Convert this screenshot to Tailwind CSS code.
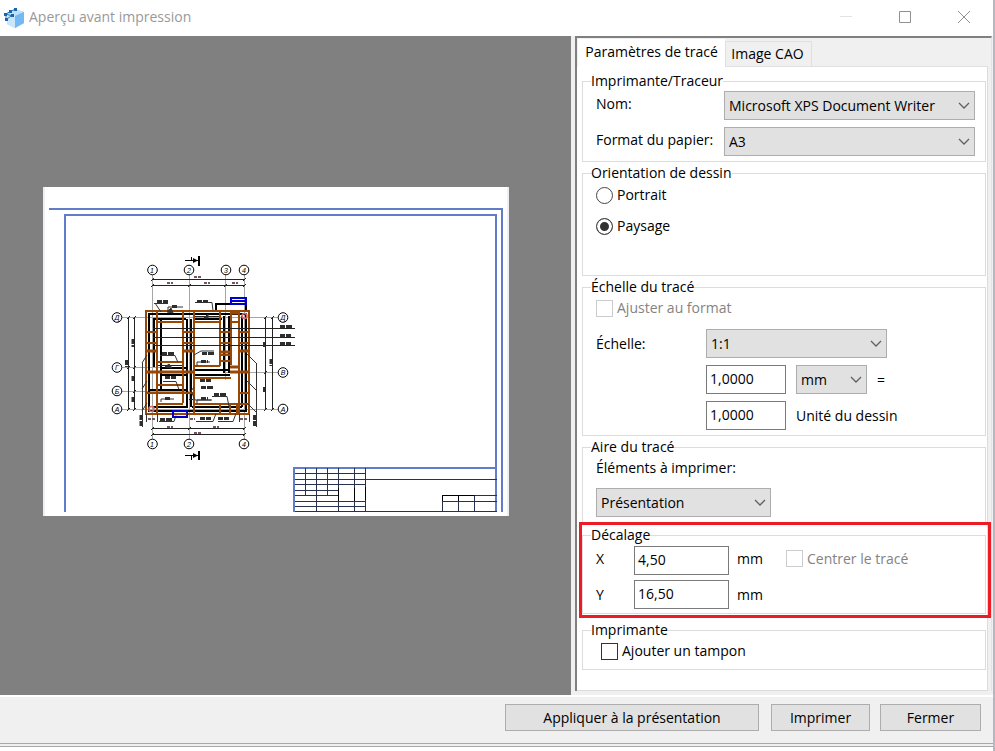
<!DOCTYPE html>
<html lang="fr">
<head>
<meta charset="utf-8">
<meta name="viewport" content="width=device-width, initial-scale=1">
<title>Aperçu avant impression</title>
<script src="https://cdn.jsdelivr.net/npm/@tailwindcss/browser@4"></script>
</head>
<body class="bg-[#b4b8c0] pr-0.5 font-['Open_Sans','Noto_Sans',sans-serif] text-sm leading-5 text-black">
<div class="flex min-h-screen flex-col bg-[#f0f0f0]">

  <header class="flex h-9 items-center bg-white pl-1">
    <svg class="h-5 w-5 shrink-0" viewBox="0 0 20 20" aria-hidden="true">
      <path d="M3 5 11 1l9 3v11l-9 5-8-4z" fill="#8cc8f5"/>
      <path d="M3 5 11 1l9 3-9 4z" fill="#bfe2fc"/>
      <path d="M11 8l9-4v11l-9 5z" fill="#74b9f4"/>
      <path d="M3 6l8 2v12l-8-4z" fill="#c9e6fb"/>
      <path d="M2 6l5-3 5-2M2 6v5M2 6l6 2M3 11l4-3" fill="none" stroke="#2b7cc6" stroke-width="1"/>
      <g fill="#1d64ad"><rect x="0" y="5" width="3" height="3"/><rect x="5" y="2" width="3" height="3"/><rect x="10" y="0" width="3" height="3"/><rect x="7" y="6" width="3" height="3"/><rect x="1" y="10" width="3" height="3"/></g>
    </svg>
    <h1 class="ml-[5px] flex-1 pb-0.5 text-[#999]">Aperçu avant impression</h1>
    <button type="button" aria-label="Réduire" disabled class="flex h-9 w-[58px] items-center justify-center"><svg class="h-3 w-3" viewBox="0 0 12 12"><path d="M0 4.500h12" stroke="#e3e3e3"/></svg></button>
    <button type="button" aria-label="Agrandir" class="flex h-9 w-[59px] items-center justify-center pb-0.5"><svg class="h-3 w-3" viewBox="0 0 12 12"><path d="M.5.5h11v11H.5z" fill="none" stroke="#909090"/></svg></button>
    <button type="button" aria-label="Fermer la fenêtre" class="flex h-9 w-[59px] items-center justify-center pb-0.5"><svg class="h-3 w-3" viewBox="0 0 12 12"><path d="M0 0l12 12M12 0L0 12" stroke="#909090"/></svg></button>
  </header>

  <main class="flex flex-1">
    <section aria-label="Aperçu" class="flex min-w-0 flex-1 items-center justify-center bg-[#808080] pr-5 pb-7">
      <svg class="w-[466px] max-w-full" viewBox="43 187 466 329" font-family="Liberation Sans, sans-serif" text-anchor="middle">
        <path d="M43 187h466v329H43z" fill="#fff"/>
        <path d="M44 187v329M508 187v329" stroke="#eceff4" stroke-width="2"/>
        <g fill="none" stroke="#617cc9" stroke-width="2">
          <path d="M49 209h454M502 209v303M64 215h433M65 215v297M496 215v297M293 468h204M294 468v44"/>
        </g>
        <g fill="none" stroke="#27314f">
          <path d="M295 473.500h70M295 479.500h202M295 484.500h70M295 490.500h43M295 495.500h43M295 501.500h71M295 506.500h71M295 511.500h202M305.500 468v27M316.500 468v44M327.500 468v27M338.500 468v44M354.500 468v44M365.500 468v44M442.500 496v16M458.500 496v16M474.500 496v16M442 495.500h55M442 501.500h55"/>
          <path d="M338.500 488v13M354.500 488v13M365.500 487v13M442.500 501v-5.500h32M458.500 495v6" stroke="#000"/>
        </g>

        <!-- Axis grid -->
        <path d="M152.500 275v164M189.500 275v164M225.500 275v105M244.500 275v164M122 317.500h156M122 367.500h66M226 372.500h52M122 391.500h68M122 409.500h156" fill="none" stroke="#a6a6a6"/>

        <!-- Walls -->
        <g fill="none" stroke="#000" stroke-width="2">
          <path d="M149 314h97v97h-97zM154 319v48M161 320v70M153 319h33M194 319h28M187 319v88M191 319v88M161 375h26M149 390h38M161 368h25M153 407h35M192 407h50M242 316v91M224 316v57M229 316v57M194 370h34M194 375h36"/>
          <path d="M216 312v-8h30v6"/>
        </g>
        <path d="M194 316.500h26M157 365.500h26M189 399.500h5" stroke="#222" fill="none"/>

        <!-- Beams -->
        <g fill="none" stroke="#984806" stroke-width="2">
          <path d="M146 311h103v103H146zM157 311v103M183 311v92M194 311v103M220 311v55M231 311v54M239 311v103M157 322h26M194 322h26M231 322h8M146 332h11M183 332h11M220 332h11M239 332h10M146 343h11M183 343h11M220 343h11M239 343h10M157 362h26M194 366h26M194 378h37M157 385h26M146 393h48M239 393h10M157 404h26M194 404h55M220 404v10M230 404v10M237 404v10M220 355h11M220 361h11"/>
          <path d="M146 351h11M183 351h11M239 351h10M146 372h48M230 367h9M230 372h19M219 352h12M231 313h8" stroke-width="3"/>
        </g>

        <!-- Slab call-outs -->
        <path d="M153 328.500h142M153 337.500h142M153 345.500h142" fill="none" stroke="#222"/>
        <g fill="none" stroke="#333">
          <path d="M154 303.500h14M155 303l6 9M168 312v-5h15M195 302.500h17l1 8M160 355.500h15l3 7M194 355l7-4h13M163 381.500h13l3 8M161 402v-3h13M197 366v-4h13M194 387l-3 4 4 9h16M197 403v-3h15M212 396.500h15l2 10M159 421.500h15l2-6M196 421.500h17l3-8M218 421.500h15l3-8"/>
          <path d="M247 354l9 9M247 381l9 9M247 403l9 9M256.500 363v64M142.500 363v64M147 355l-5 8M147 381l-5 8M147 403l-5 8M146.500 414v8M157.500 414v8M239.500 414v8M249.500 414v8"/>
        </g>
        <g fill="none" stroke="#2e2e2e" stroke-width="3" stroke-dasharray="5 1 7 0">
          <path d="M157 301.500h11M172 306.500h6M197 301.500h11M162 353.500h12M202 353.500h12M165 377.500h11M165 398.500h6M201 361.500h7M200 380.500h11M201 387.500h12M201 398.500h7M214 394.500h12M160 419.500h12M200 418.500h11M218 418.500h11M280 326.500h12M280 335.500h11M280 343.500h11"/>
          <path d="M133 339v8M126.500 360v7M133 376v6M133 397v6M141 415v11M264.500 342v6M264.500 387v6M271 359v7M254.500 415v11"/>
        </g>
        <path d="M167 312l4-4 2 5zM165 367l4-3 3 4zM204 318l4-4v4z" fill="#333" stroke="#333"/>

        <!-- Dimension lines -->
        <path d="M152 279.500h93M152 285.500h93M152 428.500h93M152 434.500h93M128.500 317v92M134.500 317v92M265.500 317v92M272.500 317v92" fill="none" stroke="#222"/>
        <path d="M151 281l3-3M243 281l3-3M151 287l3-3M188 287l3-3M224 287l3-3M243 287l3-3M151 430l3-3M188 430l3-3M243 430l3-3M151 436l3-3M243 436l3-3M127 319l3-3M133 319l3-3M127 369l3-3M133 369l3-3M133 393l3-3M127 411l3-3M133 411l3-3M264 319l3-3M271 319l3-3M264 374l3-3M264 411l3-3M271 411l3-3" stroke="#222"/>
        <path d="M194 277h7M167 283h6M204 283h6M232 283h6M167 427h6M213 427h6M194 433h7M148 419h7M190 419h5M240 419h8" stroke="#73585c" stroke-width="2" stroke-dasharray="3 1"/>

        <!-- Stairs, shafts and openings -->
        <path d="M231 298h15v6h-15zM231 301h15M187 411h-14v6h14z" fill="none" stroke="#0000c8" stroke-width="2"/>
        <path d="M179 414h8" stroke="#984806"/>
        <g fill="none" stroke="#d86b70" stroke-width="1.500"><circle cx="244.500" cy="316" r="2.500"/><circle cx="151.500" cy="409" r="2.500"/></g>

        <!-- Axis bubbles -->
        <g fill="#fff" stroke="#000">
          <circle cx="152.500" cy="270" r="4.800"/><circle cx="189" cy="270" r="4.800"/><circle cx="226" cy="270" r="4.800"/><circle cx="244" cy="270" r="4.800"/>
          <circle cx="117" cy="317.500" r="4.800"/><circle cx="117" cy="367.500" r="4.800"/><circle cx="117" cy="391" r="4.800"/><circle cx="117" cy="409" r="4.800"/>
          <circle cx="283" cy="317.500" r="4.800"/><circle cx="283" cy="372.500" r="4.800"/><circle cx="283" cy="409" r="4.800"/>
          <circle cx="152.500" cy="444" r="4.800"/><circle cx="189" cy="444" r="4.800"/><circle cx="244" cy="444" r="4.800"/>
        </g>
        <g font-size="7" font-style="italic">
          <text x="152" y="273">1</text><text x="189" y="273">2</text><text x="226" y="273">3</text><text x="244" y="273">4</text>
          <text x="117" y="320">Д</text><text x="117" y="370">Г</text><text x="117" y="394">Б</text><text x="117" y="412">А</text>
          <text x="283" y="320">Д</text><text x="283" y="375">В</text><text x="283" y="412">А</text>
          <text x="152" y="447">1</text><text x="189" y="447">2</text><text x="244" y="447">4</text>
        </g>

        <!-- Section marks -->
        <path d="M185 260.500h13M191.500 257v4M185 455.500h13M191.500 456v4" stroke="#000" fill="none"/>
        <path d="M199 256v10M199 451v9" stroke="#000" stroke-width="2"/>
        <path d="M198 260.500l-5-2.500v5zM198 455.500l-5-2.500v5z"/>
      </svg>
    </section>

    <section aria-label="Paramètres" class="flex w-[422px] shrink-0 flex-col pr-px pb-1 pl-1">
      <div class="flex flex-1 flex-col border-t-2 border-r border-l-2 border-[#808080] border-r-[#e3e3e3] pt-px pr-[3px]">
        <div role="tablist" class="flex items-end pl-px">
          <button type="button" role="tab" aria-selected="true" class="h-7 w-[147px] bg-white pb-0.5 text-center">Paramètres de tracé</button>
          <button type="button" role="tab" aria-selected="false" class="h-[26px] w-[87px] border border-[#e0e0e0] bg-[#f0f0f0] pr-0.5 text-center">Image CAO</button>
          <div class="h-px flex-1 bg-[#e0e0e0]"></div>
        </div>
        <form class="flex flex-1 flex-col gap-px border-r border-b border-[#dcdcdc] bg-white pt-1 pr-px pb-4 pl-[5px]">
          <fieldset class="border border-[#dcdcdc] pr-2.5 pb-[5px] pl-[13px]">
            <legend class="-ml-[5px] h-5">Imprimante/Traceur</legend>
            <div class="flex flex-col gap-[7px]">
              <div class="flex h-[29px] items-center">
                <label for="printer" class="w-32 pb-1">Nom:</label>
                <div class="relative flex-1">
                  <select id="printer" class="h-[29px] w-full appearance-none border border-[#adadad] bg-[#e1e1e1] pl-1"><option>Microsoft XPS Document Writer</option></select>
                  <svg class="pointer-events-none absolute top-[11px] right-[5px] h-[7px] w-3" viewBox="0 0 12 7"><path d="M1 1l5 5 5-5" fill="none" stroke="#606060" stroke-width="1.300"/></svg>
                </div>
              </div>
              <div class="flex h-[29px] items-center">
                <label for="paper" class="w-32 pb-1">Format du papier:</label>
                <div class="relative flex-1">
                  <select id="paper" class="h-[29px] w-full appearance-none border border-[#adadad] bg-[#e1e1e1] pl-1"><option>A3</option></select>
                  <svg class="pointer-events-none absolute top-[11px] right-[5px] h-[7px] w-3" viewBox="0 0 12 7"><path d="M1 1l5 5 5-5" fill="none" stroke="#606060" stroke-width="1.300"/></svg>
                </div>
              </div>
            </div>
          </fieldset>

          <fieldset class="border border-[#dcdcdc] pb-[39px] pl-[13px]">
            <legend class="-ml-[5px] h-5">Orientation de dessin</legend>
            <div class="flex flex-col gap-[11px] pt-0.5">
              <label class="flex h-5 items-center gap-1"><input type="radio" name="orientation" class="h-[17px] w-[17px] appearance-none rounded-full border border-[#444] bg-white checked:bg-[#333] checked:shadow-[inset_0_0_0_3px_white]">Portrait</label>
              <label class="flex h-5 items-center gap-1"><input type="radio" name="orientation" checked class="h-[17px] w-[17px] appearance-none rounded-full border border-[#444] bg-white checked:bg-[#333] checked:shadow-[inset_0_0_0_3px_white]">Paysage</label>
            </div>
          </fieldset>

          <fieldset class="border border-[#dcdcdc] pb-[5px] pl-[13px]">
            <legend class="-ml-[5px] h-5">Échelle du tracé</legend>
            <label class="mt-px flex h-5 items-center gap-1 text-[#838383]"><input type="checkbox" disabled class="h-[17px] w-[17px] appearance-none border border-[#ccc] bg-white">Ajuster au format</label>
            <div class="flex flex-col gap-[7px] pt-[11px]">
              <div class="flex h-[29px] items-center">
                <label for="scale" class="w-[110px]">Échelle:</label>
                <div class="relative w-[181px]">
                  <select id="scale" class="h-[29px] w-full appearance-none border border-[#adadad] bg-[#e1e1e1] pl-1"><option>1:1</option></select>
                  <svg class="pointer-events-none absolute top-[11px] right-[5px] h-[7px] w-3" viewBox="0 0 12 7"><path d="M1 1l5 5 5-5" fill="none" stroke="#606060" stroke-width="1.300"/></svg>
                </div>
              </div>
              <div class="flex h-[29px] items-center gap-2.5 pl-[110px]">
                <input type="text" aria-label="Unités du papier" value="1,0000" class="h-[29px] w-20 border border-[#7a7a7a] bg-white pb-0.5 pl-[3px]">
                <div class="relative w-[71px]">
                  <select aria-label="Unité" class="h-[29px] w-full appearance-none border border-[#adadad] bg-[#e1e1e1] pl-1"><option>mm</option></select>
                  <svg class="pointer-events-none absolute top-[11px] right-[5px] h-[7px] w-3" viewBox="0 0 12 7"><path d="M1 1l5 5 5-5" fill="none" stroke="#606060" stroke-width="1.300"/></svg>
                </div>
                <span>=</span>
              </div>
              <div class="flex h-[29px] items-center gap-2.5 pl-[110px]">
                <input id="units" type="text" value="1,0000" class="h-[29px] w-20 border border-[#7a7a7a] bg-white pb-0.5 pl-[3px]">
                <label for="units">Unité du dessin</label>
              </div>
            </div>
          </fieldset>

          <fieldset class="border border-[#dcdcdc] pb-[6px] pl-[13px]">
            <legend class="-ml-[5px] h-5">Aire du tracé</legend>
            <label for="area" class="block pt-px">Éléments à imprimer:</label>
            <div class="relative mt-[10px] w-[175px]">
              <select id="area" class="h-[29px] w-full appearance-none border border-[#adadad] bg-[#e1e1e1] pl-1"><option>Présentation</option></select>
              <svg class="pointer-events-none absolute top-[11px] right-[5px] h-[7px] w-3" viewBox="0 0 12 7"><path d="M1 1l5 5 5-5" fill="none" stroke="#606060" stroke-width="1.300"/></svg>
            </div>
          </fieldset>

          <div class="relative">
            <fieldset class="border border-[#dcdcdc] pb-1 pl-[13px]">
              <legend class="-ml-[5px] h-5">Décalage</legend>
              <div class="flex flex-col gap-[5px] pt-px">
                <div class="flex h-[29px] items-center">
                  <label for="offset-x" class="w-[38px] pb-1">X</label>
                  <input id="offset-x" type="text" value="4,50" class="h-[29px] w-[95px] border border-[#7a7a7a] bg-white pb-0.5 pl-[3px]">
                  <span class="w-[57px] pb-1 pl-2">mm</span>
                  <label class="flex items-center gap-1 pb-1 text-[#838383]"><input type="checkbox" disabled class="h-[17px] w-[17px] appearance-none border border-[#ccc] bg-white">Centrer le tracé</label>
                </div>
                <div class="flex h-[29px] items-center">
                  <label for="offset-y" class="w-[38px]">Y</label>
                  <input id="offset-y" type="text" value="16,50" class="h-[29px] w-[95px] border border-[#7a7a7a] bg-white pb-0.5 pl-[3px]">
                  <span class="pl-2">mm</span>
                </div>
              </div>
            </fieldset>
            <div class="pointer-events-none absolute -top-[3px] -right-[5px] -bottom-1 -left-[3px] border-3 border-[#ed1c24]"></div>
          </div>

          <fieldset class="mt-[5px] border border-[#dcdcdc] pb-2 pl-[18px]">
            <legend class="-ml-[10px] h-5">Imprimante</legend>
            <label class="mt-px flex h-5 items-center gap-1"><input type="checkbox" class="h-[17px] w-[17px] appearance-none border border-[#333] bg-white">Ajouter un tampon</label>
          </fieldset>
        </form>
      </div>
    </section>
  </main>

  <footer class="flex justify-end gap-2.5 border-t-2 border-b border-t-white border-b-[#a8a8a8] pt-[7px] pr-3 pb-3">
    <button type="button" class="mr-0.5 h-[27px] w-[254px] border border-[#adadad] bg-[#e1e1e1]">Appliquer à la présentation</button>
    <button type="button" class="h-[27px] w-[99px] border border-[#adadad] bg-[#e1e1e1]">Imprimer</button>
    <button type="button" class="h-[27px] w-[101px] border border-[#adadad] bg-[#e1e1e1]">Fermer</button>
  </footer>
  <div class="h-[3px] border-b border-[#a8a8a8]"></div>
  <div class="h-1 bg-white"></div>
</div>
</body>
</html>
